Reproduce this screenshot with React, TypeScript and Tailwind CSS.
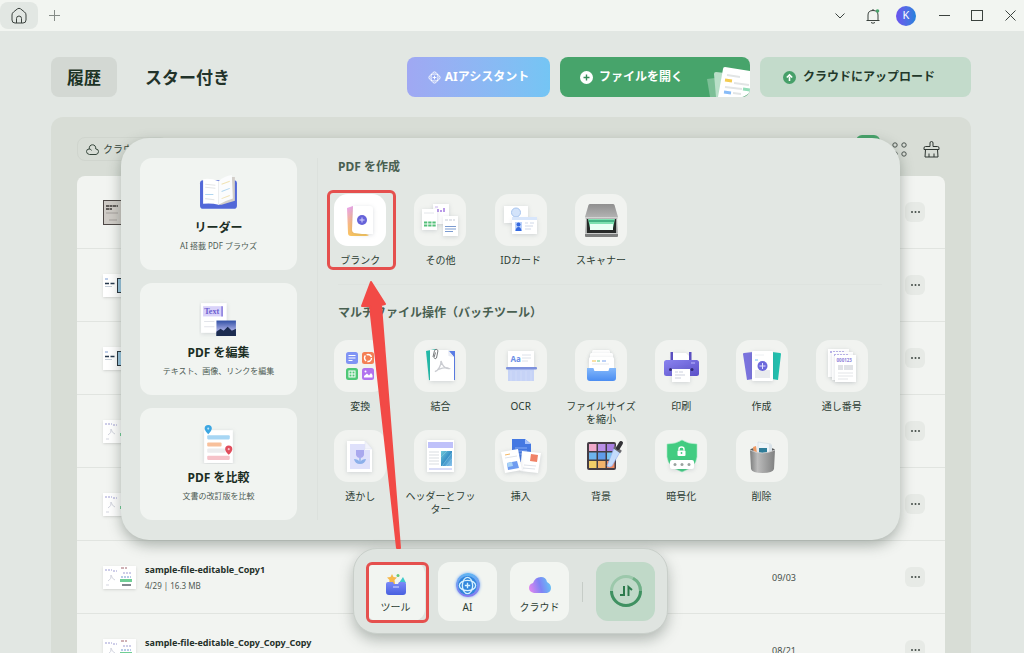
import type { ReactNode } from "react";

const paper = { fill: "#fff", filter: "drop-shadow(0 1px 2px rgba(90,100,120,0.22))" };

const BlankIcon = () => (
  <>
    <defs>
      <linearGradient id="blank" x1="0" y1="0" x2="0.3" y2="1">
        <stop offset="0" stopColor="#e7a2f2" />
        <stop offset="0.6" stopColor="#f9bb80" />
        <stop offset="1" stopColor="#fbc65c" />
      </linearGradient>
    </defs>
    <path d="M13 14 L19 12 V36 L35 41 Q34 42 32 42 H17 Q14 42 14 39 Z" fill="url(#blank)" />
    <path d="M19 12 H36 Q39 12 39 15 V40 H28 L20 39 Q18 38 18 36 Z" style={paper} />
    <circle cx="28" cy="26" r="5" fill="#6663d9" />
    <path d="M28 23.5 V28.5 M25.5 26 H30.5" stroke="#d5d4ff" strokeWidth="1" />
  </>
);

const OtherIcon = () => (
  <>
    <rect x="19" y="10" width="16" height="20" style={paper} />
    <path d="M24 18 V15 M27 18 V16 M30 18 V14" stroke="#b99ae8" strokeWidth="2" />
    <path d="M21 13 H24" stroke="#cab4ef" />
    <rect x="8" y="15" width="15" height="21" style={paper} />
    <path d="M10 19 H20" stroke="#e3e6ea" />
    <path d="M10 28.5 H22 M10 31.5 H22" stroke="#53c078" strokeWidth="2.2" strokeDasharray="3.3 0.9" />
    <rect x="29" y="22" width="15" height="20" style={paper} />
    <path d="M31 26 H41" stroke="#e1e4ea" strokeWidth="2" strokeDasharray="3 1" />
    <path d="M31 32.5 H42 M31 35 H42 M31 37.5 H39" stroke="#7b9bd0" />
  </>
);

const IdCardIcon = () => (
  <>
    <rect x="9" y="12" width="24" height="17" style={paper} />
    <circle cx="21" cy="18.5" r="4.5" fill="#d3e3fa" stroke="#a7c5ef" strokeWidth="1" />
    <rect x="17" y="25" width="25" height="15" style={paper} />
    <path d="M17 23 H42 V26 H17 Z" fill="#d8e6fb" />
    <rect x="20" y="28" width="7" height="9" fill="#bcd3fb" />
    <circle cx="23.5" cy="30.5" r="2" fill="#3468df" />
    <path d="M20.5 37 Q21 33 23.5 33 Q26 33 26.5 37 Z" fill="#3468df" />
    <path d="M30 29 H33 M35 29 H39 M30 32 H38 M30 35 H36" stroke="#cfd8e8" />
  </>
);

const ScannerIcon = () => (
  <>
    <defs>
      <linearGradient id="lid" x1="0" y1="0" x2="0" y2="1">
        <stop offset="0" stopColor="#8f8f8f" />
        <stop offset="1" stopColor="#b7b7b7" />
      </linearGradient>
    </defs>
    <path d="M11 24 H42 L43 42 H10 Z" fill="#a8aaa9" />
    <path d="M12 25 H41 V39 H12 Z" fill="#262928" />
    <path d="M13 25 H40 L38 34 H15 Z" fill="#7fe0b1" />
    <path d="M15 30 H38 V36 H15 Z" fill="#eafff5" />
    <path d="M14 27 H39" stroke="#45b184" strokeWidth="2" />
    <path d="M15 10 H38 Q39 10 39.5 11 L43 23 Q43 25 41 25 H12 Q10 25 10 23 L13.5 11 Q14 10 15 10 Z" fill="url(#lid)" />
    <path d="M10 23.5 H43" stroke="#d2d2d2" />
    <rect x="10" y="39" width="33" height="4" rx="1" fill="#7d7f7e" />
    <path d="M10 39.5 H43" stroke="#c9cbca" />
  </>
);

const ConvertIcon = () => (
  <>
    <rect x="12" y="12" width="12" height="12" rx="2.5" fill="#8094f4" />
    <path d="M14.5 15.5 H21.5 M14.5 18 H21.5 M14.5 20.5 H18.5" stroke="#fff" strokeWidth="1.2" />
    <rect x="28" y="12" width="12" height="12" rx="2.5" fill="#f47f55" />
    <circle cx="34" cy="18" r="3.5" fill="none" stroke="#fff" strokeWidth="1.4" strokeDasharray="6 1.3" />
    <rect x="12" y="28" width="12" height="12" rx="2.5" fill="#4fc877" />
    <rect x="15" y="31" width="6" height="6" fill="none" stroke="#fff" />
    <path d="M18 31 V37 M15 34 H21" stroke="#fff" />
    <rect x="28" y="28" width="12" height="12" rx="2.5" fill="#b172ee" />
    <path d="M30 37.5 V36 L33 33.5 L35 35.5 L37 33 L38.5 35 V37.5 Z" fill="#fff" />
    <circle cx="31.5" cy="31.5" r="1" fill="#fff" />
  </>
);

const MergeIcon = () => (
  <>
    <path d="M12 11 L22 9 L22 41 L15 40 Z" fill="#22bca9" />
    <path d="M28 11 H41 V40 H30 Z" fill="#5a7de8" />
    <path d="M16 10 H34 L40 17 V41 H16 Z" style={paper} />
    <path d="M34 10 L34.5 16 L40 17 Z" fill="#e9ecf5" />
    <path
      d="M27 21 C28 25 31 29 35 28.5 C32 26.5 25 28.5 21 31.5 C24 31 27.5 25 27 21 Z"
      fill="none"
      stroke="#cbcdd2"
      strokeWidth="1.4"
    />
    <path d="M19 17 L20.5 10.5 Q22 8 24 10.5 L22.5 18 Q21 20 20 17.5 L21.5 12.5" fill="none" stroke="#77797b" />
  </>
);

const OcrIcon = () => (
  <>
    <rect x="13" y="11" width="26" height="17" style={paper} />
    <text x="15.5" y="22" fontSize="8" fontWeight="700" fill="#6c8fe6" fontFamily="Noto Sans">
      Aa
    </text>
    <path d="M27 15 H36 M27 18 H36 M27 21 H33" stroke="#dde2ea" />
    <rect x="13" y="29" width="26" height="12" fill="#c6d3f6" />
    <path d="M16 31 V41 M21 31 V41 M26 31 V41 M31 31 V41 M36 31 V41" stroke="#cfdaf8" />
    <rect x="11" y="27" width="31" height="2.5" rx="1" fill="#7e92dd" />
  </>
);

const CompressIcon = () => (
  <>
    <defs>
      <linearGradient id="tray" x1="0" y1="0" x2="0" y2="1">
        <stop offset="0" stopColor="#83b8fb" />
        <stop offset="1" stopColor="#4b8df1" />
      </linearGradient>
    </defs>
    <rect x="17" y="10" width="18" height="8" rx="1.5" style={paper} />
    <rect x="15" y="13" width="23" height="8" rx="1.5" style={paper} />
    <rect x="14" y="17" width="25" height="16" rx="1.5" style={paper} />
    <path d="M17 21 H21" stroke="#f3c14f" />
    <path d="M22 21 H25" stroke="#63c989" />
    <path d="M27 21 H31" stroke="#79a2ef" />
    <path d="M17 24 H34" stroke="#e5e8ed" />
    <path d="M12 28 H18 Q19 28 19 30 Q19 31 20 31 H33 Q34 31 34 29 Q34 28 35 28 H41 V38 Q41 41 38 41 H15 Q12 41 12 38 Z" fill="url(#tray)" />
  </>
);

const PrintIcon = () => (
  <>
    <defs>
      <linearGradient id="printer" x1="0" y1="0" x2="1" y2="1">
        <stop offset="0" stopColor="#8a84ef" />
        <stop offset="1" stopColor="#5b50c9" />
      </linearGradient>
    </defs>
    <path d="M18 13 H31 L34 16 V22 H18 Z" style={paper} />
    <rect x="15.5" y="12" width="2.5" height="9" fill="#5b4fc0" />
    <rect x="34" y="12" width="2.5" height="9" fill="#5b4fc0" />
    <rect x="9" y="20" width="35" height="16" rx="2.5" fill="url(#printer)" />
    <circle cx="15.5" cy="29.5" r="1.5" fill="#2e2873" />
    <circle cx="37" cy="29.5" r="1.5" fill="#2e2873" />
    <path d="M36 23 H40" stroke="#bdb8ff" />
    <rect x="17" y="29" width="18" height="13" style={paper} />
    <path d="M20 32 H23 M24 32 H28 M20 35 H30 M20 38 H26" stroke="#cdd1dd" />
  </>
);

const CreateIcon = () => (
  <>
    <path d="M7 14 Q7 13 8 13 L17 12 V39 L11 40 Z" fill="#7a73dd" />
    <path d="M45 14 Q45 13 44 13 L36 12 V39 L42 40 Z" fill="#22bfae" />
    <rect x="16" y="11" width="21" height="30" rx="1" style={paper} />
    <path d="M19 20 H22" stroke="#73c1f0" />
    <path d="M19 15 H28" stroke="#edf0f3" />
    <path d="M19 30 H34 V38 H19 Z" fill="#e9ebee" />
    <circle cx="26.5" cy="26" r="5" fill="#6d69dc" />
    <path d="M26.5 23 V29 M23.5 26 H29.5" stroke="#e4e3ff" />
  </>
);

const SerialIcon = () => (
  <>
    <rect x="12" y="9" width="21" height="28" style={paper} />
    <path d="M14 12 H28" stroke="#a69de5" strokeWidth="1.5" strokeDasharray="2 1" />
    <rect x="16" y="12" width="21" height="28" style={paper} />
    <path d="M18 15 H32" stroke="#a69de5" strokeWidth="1.5" strokeDasharray="2 1" />
    <rect x="19" y="15" width="21" height="27" style={paper} />
    <text x="20.5" y="22" fontSize="4.5" fontWeight="700" fill="#8b80d8" fontFamily="Noto Sans">
      000123
    </text>
    <rect x="22" y="25" width="5" height="5" fill="#e0e2e6" />
    <rect x="28" y="25" width="9" height="5" fill="#e0e2e6" />
    <path d="M22 33 H37 M22 36 H37 M22 39 H32" stroke="#e3e5e8" />
  </>
);

const WatermarkIcon = () => (
  <>
    <path d="M13 11 H31 L38 19 V42 H13 Z" style={paper} />
    <path d="M16 14 H31 V20 H36 V39 H16 Z" fill="#dfe1fb" />
    <path d="M31 11 V19 H38 Z" fill="#f2f3fb" stroke="#dfe2ef" strokeWidth="0.5" />
    <path d="M22 20 H30 V25 Q29 28 26 28 Q23 28 22 25 Z" fill="#a9a8ee" />
    <path d="M20 29 Q24 29 26 32 Q28 29 32 29 Q31 34 26 34 Q21 34 20 29 Z" fill="#8cb0ea" />
    <path d="M26 28 V33" stroke="#8cb0ea" strokeWidth="1.4" />
  </>
);

const HeaderFooterIcon = () => (
  <>
    <defs>
      <linearGradient id="photo" x1="0" y1="0" x2="1" y2="1">
        <stop offset="0" stopColor="#71cbd9" />
        <stop offset="0.5" stopColor="#3a91c6" />
        <stop offset="1" stopColor="#8fc6ef" />
      </linearGradient>
    </defs>
    <rect x="13" y="10" width="27" height="32" style={paper} />
    <rect x="14" y="12" width="25" height="6" fill="#bfc1fa" />
    <path d="M15 22 H25 M15 25 H25 M15 28 H25 M15 31 H25 M15 34 H25" stroke="#e6e9eb" strokeWidth="1.5" />
    <rect x="27" y="21" width="11" height="15" fill="url(#photo)" />
    <path d="M38 23 L28 36 M38 29 L32 36 M33 21 L27 27" stroke="#8fd3e6" strokeWidth="0.5" />
    <path d="M15 39 H38" stroke="#cdd0f4" strokeWidth="1.5" />
  </>
);

const InsertIcon = () => (
  <>
    <path d="M17 9 H30 L36 14 V32 H17 Z" fill="#4478e2" />
    <path d="M30 9 V14 H36 Z" fill="#a9c4fb" />
    <path d="M20 18 H32 M20 21 H32 M20 24 H30" stroke="#86acf6" />
    <path d="M27 21 L46 23 L43 43 L25 41 Z" style={paper} />
    <path d="M36 24 L43 25 L42 32 L35 31 Z" fill="#f08266" />
    <path d="M29 35 L41 36 M28 38 L40 39" stroke="#dfe3ea" />
    <path d="M6 22 L23 19 L27 40 L10 43 Z" style={paper} />
    <path d="M10 25 L15 24" stroke="#f4b763" />
    <path d="M10 28 L22 26" stroke="#dfe3ea" />
    <path d="M12 33 L22 31 L24 38 L13 40 Z" fill="#6f9cf0" />
    <path d="M12 33 L17 32 L18 36 L13 37 Z" fill="#a9d3f6" />
  </>
);

const swatches = ["#f0a8c9", "#b98fe6", "#a87fe2", "#6db4ec", "#5f9be8", "#78c4ef", "#f2ce68", "#f3b26b", "#ef8a62"];

const BackgroundIcon = () => (
  <>
    <rect x="12" y="12" width="29" height="28" rx="2" fill="#453d45" />
    {swatches.map((color, i) => (
      <rect key={color} x={14 + (i % 3) * 9} y={14 + Math.floor(i / 3) * 8.5} width="7.5" height="7" fill={color} />
    ))}
    <path d="M39 18 L45 22 L37 36 Q34 38 32 36 Z" fill="#c3dbfb" stroke="#8faaf2" strokeWidth="0.6" />
    <path d="M39 17 L46 22" stroke="#6a6a6f" strokeWidth="3" />
    <path d="M43 18 L46 13" stroke="#333337" strokeWidth="4" strokeLinecap="round" />
  </>
);

const EncryptIcon = () => (
  <>
    <path
      d="M27 10 Q33 14 42 14 V27 Q41 37 27 42 Q13 37 12 27 V14 Q21 14 27 10 Z"
      fill="#42cc81"
      stroke="#a5eac5"
      strokeWidth="0.6"
    />
    <path d="M24 20.5 V19 Q24 17 26.5 17 Q29 17 29 19 V20.5" fill="none" stroke="#fff" strokeWidth="1.4" />
    <rect x="22.5" y="20.5" width="8" height="5.5" rx="1" fill="#fff" />
    <circle cx="26.5" cy="23" r="0.9" fill="#42cc81" />
    <rect x="15" y="30" width="24" height="9" rx="2" style={paper} />
    <circle cx="20" cy="34.5" r="1.5" fill="#9aa29f" />
    <circle cx="27" cy="34.5" r="1.5" fill="#9aa29f" />
    <circle cx="34" cy="34.5" r="1.5" fill="#9aa29f" />
  </>
);

const DeleteIcon = () => (
  <>
    <defs>
      <linearGradient id="can" x1="0" y1="0" x2="1" y2="0">
        <stop offset="0" stopColor="#7c7d7d" />
        <stop offset="0.3" stopColor="#bcbcbc" />
        <stop offset="1" stopColor="#7f8080" />
      </linearGradient>
    </defs>
    <ellipse cx="26.5" cy="20" rx="12.5" ry="3" fill="#5b5d5e" />
    <path d="M17 14 L24 12 L26 22 H18 Z" fill="#f0f4f6" />
    <path d="M17 17 L20 16 L21 23 L18 23 Z" fill="#ef9a63" />
    <path d="M22 12 L35 14 L34 23 H22 Z" fill="#eef4f8" stroke="#c9d6dc" strokeWidth="0.5" />
    <path d="M23 18 H31 V23 H23 Z" fill="#2f7d99" />
    <path d="M33 14 L36 15 L36 22 H33 Z" fill="#d9e2e8" />
    <path d="M14 20 Q26 26 39 20 L38 39 Q37 43 26.5 43 Q16 43 15 39 Z" fill="url(#can)" />
    <path d="M14 20 Q26 26 39 20" fill="none" stroke="#d8d8d8" strokeWidth="0.8" />
  </>
);

const ReaderIcon = () => (
  <>
    <path d="M1 9 Q1 6 4 6 H34 Q37 6 37 9 V31 Q37 34 34 34 H4 Q1 34 1 31 Z" fill="#5268d8" />
    <path d="M4 5 Q12 4 19 7 V30 Q12 28 4 29 Z" fill="#fff" />
    <path d="M32 3 H35 V26 L22 30 H19 Z" fill="#d3cfca" />
    <path d="M19 7 Q25 2 32 1 L33 24 Q26 26 19 30 Z" fill="#fbfcfd" />
    <path d="M6 10 L16 11 M6 13 L16 14 M6 24 L15 25" stroke="#e3e5e6" />
    <path d="M22 10 L30 7 M22 24 L30 21" stroke="#f1e3b5" />
    <path d="M6 20 L14 20 M22 17 L30 14" stroke="#b0d6f0" />
    <path d="M19 7 V30" stroke="#eceeef" />
  </>
);

const EditIcon = () => (
  <>
    <defs>
      <linearGradient id="sky" x1="0" y1="0" x2="0" y2="1">
        <stop offset="0" stopColor="#3150a5" />
        <stop offset="0.6" stopColor="#9fa6e0" />
        <stop offset="1" stopColor="#294a80" />
      </linearGradient>
    </defs>
    <rect x="2" y="4" width="25" height="29" style={paper} />
    <rect x="4" y="7" width="19" height="10" fill="#d9d2f9" />
    <text x="5" y="15" fontSize="8" fontWeight="700" fill="#6e5fd0" fontFamily="Liberation Serif">
      Text
    </text>
    <path d="M22.5 7 V17" stroke="#5b4bd0" />
    <path d="M5 22 H15 M5 27 H15" stroke="#e2e4ea" />
    <rect x="17" y="21" width="19" height="15" fill="url(#sky)" />
    <path d="M17 32 L21 29 L24 31 L28 27 L32 31 L36 29 V36 H17 Z" fill="#1c2c50" />
  </>
);

const CompareIcon = () => (
  <>
    <rect x="5" y="6" width="28" height="32" style={paper} />
    <rect x="8" y="11" width="22" height="4" rx="1" fill="#a7d6f4" />
    <rect x="8" y="18" width="14" height="4" rx="1" fill="#f8c09b" />
    <rect x="8" y="24" width="18" height="4" rx="1" fill="#ececee" />
    <rect x="8" y="31" width="22" height="4" rx="1" fill="#f6c2c9" />
    <path d="M9 10 Q5.5 6.5 5.5 4.5 A3.5 3.5 0 0 1 12.5 4.5 Q12.5 6.5 9 10 Z" fill="#3ba6e2" />
    <circle cx="9" cy="4.5" r="1" fill="#bfe4f8" />
    <path d="M29 30 Q25.5 26.5 25.5 24.5 A3.5 3.5 0 0 1 32.5 24.5 Q32.5 26.5 29 30 Z" fill="#e14d5c" />
    <circle cx="29" cy="24.5" r="1" fill="#fac4ca" />
  </>
);

const Orbit = ({ className }: { className: string }) => (
  <svg className={className} viewBox="0 0 14 14" fill="none" stroke="currentColor">
    <ellipse cx="7" cy="7" rx="6" ry="3.8" />
    <ellipse cx="7" cy="7" rx="3.8" ry="6" />
    <path d="M7 5 V9 M5 7 H9" />
  </svg>
);

const features = [
  { title: "リーダー", note: "AI 搭載 PDF ブラウズ", icon: <ReaderIcon /> },
  { title: "PDF を編集", note: "テキスト、画像、リンクを編集", icon: <EditIcon /> },
  { title: "PDF を比較", note: "文書の改訂版を比較", icon: <CompareIcon /> },
];

const createTools = [
  { label: "ブランク", icon: <BlankIcon />, marked: true },
  { label: "その他", icon: <OtherIcon /> },
  { label: "IDカード", icon: <IdCardIcon /> },
  { label: "スキャナー", icon: <ScannerIcon /> },
];

const batchTools = [
  { label: "変換", icon: <ConvertIcon /> },
  { label: "結合", icon: <MergeIcon /> },
  { label: "OCR", icon: <OcrIcon /> },
  { label: "ファイルサイズを縮小", icon: <CompressIcon /> },
  { label: "印刷", icon: <PrintIcon /> },
  { label: "作成", icon: <CreateIcon /> },
  { label: "通し番号", icon: <SerialIcon /> },
  { label: "透かし", icon: <WatermarkIcon /> },
  { label: "ヘッダーとフッター", icon: <HeaderFooterIcon /> },
  { label: "挿入", icon: <InsertIcon /> },
  { label: "背景", icon: <BackgroundIcon /> },
  { label: "暗号化", icon: <EncryptIcon /> },
  { label: "削除", icon: <DeleteIcon /> },
];

const files = [
  { thumb: "scan" },
  { thumb: "slide" },
  { thumb: "slide" },
  { thumb: "sheet" },
  { thumb: "sheet" },
  { thumb: "sheet", name: "sample-file-editable_Copy1", info: "4/29 | 16.3 MB", date: "09/03" },
  { thumb: "sheet", name: "sample-file-editable_Copy_Copy_Copy", date: "08/21" },
];

function Thumb({ kind }: { kind: string }) {
  if (kind === "scan") {
    return (
      <svg className="h-[25px] w-[33px]" viewBox="0 0 33 25">
        <rect x="0.5" y="0.5" width="20" height="24" fill="#cfcbc6" stroke="#4d4745" />
        <path d="M3 6 H15 M3 9 H9" stroke="#3c3836" strokeWidth="1.5" strokeDasharray="3 0.5" />
        <path d="M3 13 H15 M6 20 H14" stroke="#a5a09c" />
      </svg>
    );
  }
  if (kind === "slide") {
    return (
      <svg className="h-[23px] w-[33px] shadow-sm" viewBox="0 0 33 23">
        <rect width="33" height="23" fill="#fff" />
        <path d="M2 5 H5" stroke="#7a9bd0" />
        <path d="M2 9.5 H13" stroke="#26384d" strokeWidth="1.5" strokeDasharray="4 1.5" />
        <path d="M2 12.5 H9" stroke="#c5ced8" />
        <rect x="14.5" y="4.5" width="16" height="14" fill="#9bc8e4" stroke="#26303a" />
      </svg>
    );
  }
  return (
    <svg className="h-[23px] w-[33px] shadow-sm" viewBox="0 0 33 23">
      <rect width="33" height="23" fill="#fff" />
      <path d="M2 4 H9 M10 5 H14 M20 7 H29" stroke="#9d9cd2" strokeDasharray="2 1" />
      <path d="M5 15 Q9 13 8 9 Q9 13 12 14 M3 19 H6" fill="none" stroke="#d3d5df" />
      <path d="M18 2 H24" stroke="#a0646c" strokeDasharray="3 1" />
      <path d="M18 11 H28" stroke="#7196cf" strokeDasharray="2 1" />
      <path d="M17 14.5 H29" stroke="#6fce95" strokeWidth="3" />
      <path d="M19 19 H28" stroke="#596069" strokeWidth="1.5" />
    </svg>
  );
}

function Tool({ label, icon, marked }: { label: string; icon: ReactNode; marked?: boolean }) {
  return (
    <button className="relative flex flex-col items-center">
      <span className={`size-[52px] rounded-[14px] ${marked ? "bg-white" : "bg-[#f1f3f0]"}`}>
        <svg className="size-full" viewBox="0 0 52 52">
          {icon}
        </svg>
      </span>
      <span className="mt-2 w-[70px] text-[10px] leading-[13px] text-[#2c3d33]">{label}</span>
      {marked && <span className="absolute -top-1 right-1 left-[7px] h-20 rounded-md border-3 border-[#e5504e]" />}
    </button>
  );
}

function TitleBar() {
  return (
    <div className="flex h-[31px] shrink-0 items-center bg-[#f2f5f1] text-[#3b423e]">
      <button aria-label="ホーム" className="flex h-[27px] w-[38px] items-center justify-center rounded-lg bg-[#e2e7e3]">
        <svg className="size-[18px]" viewBox="0 0 18 18" fill="none" stroke="currentColor">
          <path d="M2 8 Q2 6 3.5 5 L7.5 1.8 Q9 0.8 10.5 1.8 L14.5 5 Q16 6 16 8 V13 Q16 16 13 16 H5 Q2 16 2 13 Z" />
          <path d="M6.5 16 V11.5 Q6.5 9 9 9 Q11.5 9 11.5 11.5 V16" />
        </svg>
      </button>
      <button aria-label="新しいタブ" className="ml-[11px]">
        <svg className="size-[11px]" viewBox="0 0 11 11" stroke="#858b87">
          <path d="M5.5 0 V11 M0 5.5 H11" />
        </svg>
      </button>
      <div className="ml-auto flex items-center pr-2">
        <button aria-label="一覧">
          <svg className="h-[6px] w-[10px]" viewBox="0 0 10 6" fill="none" stroke="currentColor">
            <path d="M0.5 0.5 L5 5 L9.5 0.5" />
          </svg>
        </button>
        <button aria-label="通知" className="ml-5">
          <svg className="size-4" viewBox="0 0 16 16" fill="none" stroke="currentColor">
            <path d="M1.5 12.5 H14.5 M3 12.5 V7 Q3 2.5 8 2.5 Q13 2.5 13 7 V12.5 M8 2.5 V1 M6 14.5 Q8 16 10 14.5" />
            <circle cx="12.5" cy="3" r="1.8" fill="#4aa56c" stroke="none" />
          </svg>
        </button>
        <button className="ml-[15px] flex size-5 items-center justify-center rounded-full bg-linear-to-r from-[#6a52ee] to-[#1f82dc] text-[11px] text-white">
          K
        </button>
        <button aria-label="最小化" className="ml-[23px]">
          <svg className="size-[11px]" viewBox="0 0 11 11" stroke="currentColor">
            <path d="M0 5.5 H11" />
          </svg>
        </button>
        <button aria-label="最大化" className="ml-[21px]">
          <svg className="h-[11px] w-3" viewBox="0 0 12 11" fill="none" stroke="currentColor">
            <rect x="0.5" y="0.5" width="11" height="10" />
          </svg>
        </button>
        <button aria-label="閉じる" className="ml-[22px]">
          <svg className="size-[11px]" viewBox="0 0 11 11" stroke="currentColor">
            <path d="M0.5 0.5 L10.5 10.5 M10.5 0.5 L0.5 10.5" />
          </svg>
        </button>
      </div>
    </div>
  );
}

function Header() {
  return (
    <header className="mt-[26px] flex h-10 items-center gap-[10px] text-xs font-bold">
      <button className="h-10 rounded-lg bg-[#d3d8d3] px-4 pt-[3px] text-[17px] text-[#1c3324]">履歴</button>
      <button className="mr-auto h-10 pt-[3px] pl-[18px] text-[17px] text-[#22332a]">スター付き</button>
      <button className="flex h-10 w-[143px] items-center justify-center gap-1 rounded-lg bg-linear-to-r from-[#a0a8f3] to-[#74c5f4] text-white">
        <Orbit className="size-[13px]" />
        AIアシスタント
      </button>
      <button className="flex h-10 w-[190px] items-center gap-[6px] overflow-hidden rounded-lg bg-[#47a46b] pl-5 text-white">
        <svg className="size-[13px]" viewBox="0 0 13 13">
          <circle cx="6.5" cy="6.5" r="6.5" fill="#fff" />
          <path d="M6.5 3.5 V9.5 M3.5 6.5 H9.5" stroke="#358c58" strokeWidth="1.4" />
        </svg>
        ファイルを開く
        <svg className="ml-auto h-[30px] w-[43px] self-end" viewBox="0 0 43 30">
          <path d="M0 12 L8 11 L11 30 H3 Z" fill="#7cbf96" />
          <path d="M7 7 Q7 5 9 5 L18 6 L15 30 H9 Z" fill="#b9dfc8" />
          <path d="M16 2 Q16 0 18 0 L43 4 V26 L36 30 H11 Z" fill="#fff" />
          <path d="M20 8 L33 10 M27 16 L42 18 M18 20 L35 22 M26 26 L34 27" stroke="#e2e5e5" strokeWidth="2" />
          <path d="M18 13 L25 14" stroke="#f3cb50" strokeWidth="3" />
          <path d="M17 25 L24 26" stroke="#87bbf7" strokeWidth="3" />
          <path d="M36 22 L43 23" stroke="#94ddb8" strokeWidth="3" />
        </svg>
      </button>
      <button className="flex h-10 w-[211px] items-center gap-[7px] rounded-lg bg-[#c3dbcb] pl-[23px] text-[#22382a]">
        <svg className="size-[13px]" viewBox="0 0 13 13">
          <circle cx="6.5" cy="6.5" r="6.5" fill="#46a069" />
          <path d="M6.5 10 V5.5 M3.8 6.5 L6.5 3.8 L9.2 6.5" fill="none" stroke="#fff" strokeWidth="1.6" />
        </svg>
        クラウドにアップロード
      </button>
    </header>
  );
}

function FileList() {
  return (
    <section className="mt-5 flex-1 rounded-t-xl bg-[#d8ddd6] px-[26px] pt-[18px]">
      <div className="flex h-7 items-center">
        <button className="flex h-6 items-center gap-1 rounded-lg border border-[#d0d5ce] pl-2 pr-6 text-[10px] text-[#35463b]">
          <svg className="h-[11px] w-[13px]" viewBox="0 0 13 11" fill="none" stroke="currentColor">
            <path d="M3.5 10.5 Q0.5 10 0.5 7.5 Q0.5 5 3.2 5 Q3.2 0.8 6.5 0.8 Q9.8 0.8 9.8 5 Q12.5 5 12.5 7.5 Q12.5 10 10 10.5 Z M3.2 5 Q5 5 5.5 6.5" />
          </svg>
          クラウド
        </button>
        <button aria-label="リスト表示" className="ml-auto h-7 w-6 rounded-md bg-[#47a46b]" />
        <button aria-label="グリッド表示" className="ml-3">
          <svg className="size-[15px]" viewBox="0 0 15 15" fill="none" stroke="#4b544f">
            <circle cx="3" cy="3" r="2.2" />
            <circle cx="12" cy="3" r="2.2" />
            <circle cx="3" cy="12" r="2.2" />
            <circle cx="12" cy="12" r="2.2" />
          </svg>
        </button>
        <button aria-label="履歴を消去" className="mr-[5px] ml-4">
          <svg className="size-[17px]" viewBox="0 0 17 17" fill="none" stroke="#2e3632">
            <path d="M7 5.5 V2 Q7 0.5 8.5 0.5 Q10 0.5 10 2 V5.5 H14.5 Q16 5.5 16 7 V8.5 H1 V7 Q1 5.5 2.5 5.5 Z" />
            <path d="M2.5 8.5 L2 16 H15 L14.5 8.5 M6 16 V12.5 M11 16 V12.5" />
          </svg>
        </button>
      </div>
      <table className="mt-[13px] w-full border-separate border-spacing-0 overflow-hidden rounded-t-lg bg-[#f2f4f1] text-left">
        <tbody>
          {files.map((file, i) => (
            <tr key={i}>
              <td className="h-[73px] w-[68px] border-b border-[#e1e4e0] pl-[26px]">
                <Thumb kind={file.thumb} />
              </td>
              <td className="border-b border-[#e1e4e0] pt-[2px]">
                <div className="text-[9px] leading-4 font-bold text-[#25312a]">{file.name}</div>
                <div className="h-4 text-[8px] leading-4 text-[#505a54]">{file.info}</div>
              </td>
              <td className="w-[133px] border-b border-[#e1e4e0] pt-[2px] text-[9px] text-[#46504a]">{file.date}</td>
              <td className="w-10 border-b border-[#e1e4e0]">
                <button aria-label="その他の操作" className="flex size-5 items-center justify-center rounded-md bg-[#e7eae6]">
                  <svg className="h-[2px] w-[9px]" viewBox="0 0 9 2" fill="#454d48">
                    <circle cx="1" cy="1" r="1" />
                    <circle cx="4.5" cy="1" r="1" />
                    <circle cx="8" cy="1" r="1" />
                  </svg>
                </button>
              </td>
            </tr>
          ))}
        </tbody>
      </table>
    </section>
  );
}

function ToolPanel() {
  return (
    <div className="flex w-full rounded-[28px] bg-[#e2e7e3] py-5 pl-[19px] pr-[18px] shadow-[0_5px_14px_rgba(60,75,65,0.4)]">
      <div className="flex w-[157px] shrink-0 flex-col gap-[13px]">
        {features.map((feature) => (
          <button key={feature.title} className="flex h-28 flex-col items-center rounded-xl bg-[#f1f4f1] pt-4">
            <svg className="size-10" viewBox="0 0 39 39">
              {feature.icon}
            </svg>
            <span className="mt-1 text-xs leading-5 font-bold text-[#1c2e24]">{feature.title}</span>
            <span className="text-[8px] leading-4 text-[#4d5b53]">{feature.note}</span>
          </button>
        ))}
      </div>
      <div className="ml-5 flex-1 border-l border-[#dce1dd] pl-[2px]">
        <h2 className="pl-[18px] text-xs leading-[18px] font-bold text-[#496051]">PDF を作成</h2>
        <div className="mt-[18px] grid grid-cols-7">
          {createTools.map((tool) => (
            <Tool key={tool.label} {...tool} />
          ))}
        </div>
        <div className="mt-[17px] ml-[18px] border-t border-[#dee3df]" />
        <h2 className="mt-[19px] pl-[18px] text-xs leading-[18px] font-bold text-[#496051]">
          マルチファイル操作（バッチツール）
        </h2>
        <div className="mt-[18px] grid grid-cols-7 items-start gap-y-1">
          {batchTools.map((tool) => (
            <Tool key={tool.label} {...tool} />
          ))}
        </div>
      </div>
    </div>
  );
}

function Dock() {
  const tile = "relative flex size-[59px] flex-col items-center rounded-xl bg-[#f2f5f1] pt-2 text-[10px] text-[#2c3d33]";
  return (
    <nav className="mt-2 flex items-center gap-[13px] rounded-[24px] border border-[#c9cfca] bg-[#dfe4e0] px-3 pt-[13px] pb-3 shadow-[0_6px_14px_rgba(60,75,65,0.35)]">
      <button className={tile}>
        <svg className="size-[30px]" viewBox="0 0 30 30">
          <defs>
            <linearGradient id="box" x1="0" y1="0" x2="0" y2="1">
              <stop offset="0" stopColor="#7b8af8" />
              <stop offset="1" stopColor="#4860df" />
            </linearGradient>
          </defs>
          <path d="M11 4 L12.5 7 L16 7.5 L13.5 10 L14 14 H8 L8.5 10 L6 7.5 L9.5 7 Z" fill="#f6b84b" />
          <path d="M18 13 L22 7 L25 13 Z" fill="#3ec9cb" />
          <circle cx="17" cy="5.5" r="1.5" fill="#63c978" />
          <path d="M5 14 Q5 12 7 12 H12 L13 14 H17 L18 12 H23 Q25 12 25 14 V22 Q25 25 22 25 H8 Q5 25 5 22 Z" fill="url(#box)" />
          <path d="M12 17 H18" stroke="#d9ddff" />
        </svg>
        <span className="leading-[15px]">ツール</span>
        <span className="absolute top-0 -right-1 -bottom-[2px] left-0 rounded-md border-3 border-[#e5504e]" />
      </button>
      <button className={tile}>
        <span className="flex size-[30px] items-center justify-center">
          <span className="flex size-6 items-center justify-center rounded-full bg-linear-to-b from-[#5fb6f3] to-[#8478ee] shadow-[0_0_3px_#79aaf5]">
            <span className="flex items-center justify-center rounded-full bg-[#3186dc] text-[#d7f1ff]">
              <Orbit className="size-[19px]" />
            </span>
          </span>
        </span>
        <span className="leading-[15px]">AI</span>
      </button>
      <button className={tile}>
        <svg className="size-[30px]" viewBox="0 0 30 30">
          <defs>
            <linearGradient id="cloud" x1="0" y1="0.6" x2="1" y2="0.4">
              <stop offset="0" stopColor="#dd86ef" />
              <stop offset="0.5" stopColor="#7f83f5" />
              <stop offset="1" stopColor="#66c4f5" />
            </linearGradient>
          </defs>
          <path d="M9 23 Q4 22 4 18 Q4 14 8 13 Q10 7 16 7 Q21 7 22 12 Q26 14 26 18 Q26 22 22 23 Z" fill="url(#cloud)" />
        </svg>
        <span className="leading-[15px]">クラウド</span>
      </button>
      <span className="h-5 w-px bg-[#c6ccc7]" />
      <button aria-label="転送" className="flex size-[59px] items-center justify-center rounded-xl bg-[#c0d9c8]">
        <svg className="size-[34px]" viewBox="0 0 34 34" fill="none">
          <circle cx="17" cy="16" r="14.5" stroke="#9cc8ab" strokeWidth="3" />
          <path d="M31.5 16 A14.5 14.5 0 0 1 2.5 16" stroke="#3f9161" strokeWidth="3" />
          <path d="M31.5 16 A14.5 14.5 0 0 0 24 3.3" stroke="#71b088" strokeWidth="3" />
          <path d="M15 11 V20 H11 M19.5 21 V12 L23 15" stroke="#2c7a4c" strokeWidth="2" />
        </svg>
      </button>
    </nav>
  );
}

export default function App() {
  return (
    <div
      lang="ja"
      className="relative flex h-screen flex-col overflow-hidden bg-[#e2e7e3] font-['Noto_Sans','Noto_Sans_CJK_JP',sans-serif]"
    >
      <TitleBar />
      <main className="flex flex-1 flex-col pl-[51px] pr-[53px]">
        <Header />
        <FileList />
      </main>

      {/* Tool launcher floating over the file list */}
      <div className="absolute top-[138px] right-[124px] left-[121px] flex flex-col items-center">
        <ToolPanel />
        <Dock />
        <svg className="pointer-events-none absolute top-[142px] left-[238px] h-[269px] w-11" viewBox="0 0 44 269">
          <path
            d="M12 2 L26 24 L22 25 L41 268 L38 268 L11 26 L3 26 Z"
            fill="#f24a46"
            stroke="#f24a46"
            strokeWidth="2"
            strokeLinejoin="round"
          />
        </svg>
      </div>
    </div>
  );
}
